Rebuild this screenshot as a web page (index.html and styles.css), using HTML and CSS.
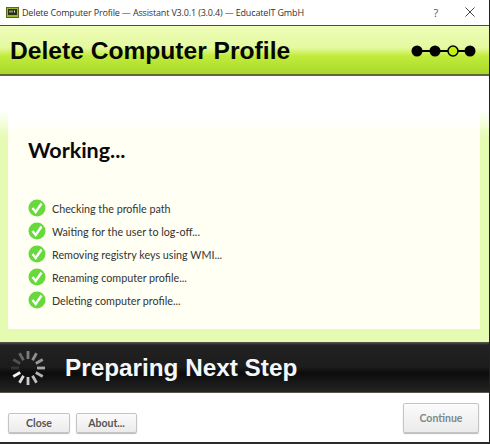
FILE: index.html
```html
<!DOCTYPE html>
<html lang="en">
<head>
<meta charset="utf-8">
<title>Delete Computer Profile</title>
<link rel="stylesheet" href="styles.css">
</head>
<body>
<div class="window">
  <div class="titlebar">
    <svg class="app-icon" width="13" height="11" viewBox="0 0 13 11"><rect x="0.5" y="0.5" width="12" height="10" fill="#9ab82c" stroke="#5c6b1a"/><rect x="2" y="2" width="9" height="6" fill="#2a2f18"/><path d="M4 3.500v2M6 3.500v2M8.500 3.500v2" stroke="#e8f0c0" stroke-width="1"/></svg>
    <span class="title-text">Delete Computer Profile — Assistant V3.0.1 (3.0.4) — EducateIT GmbH</span>
    <span class="help">?</span>
    <svg class="close" width="10" height="10" viewBox="0 0 10 10"><path d="M0.500 0.500l9 9M9.500 0.500l-9 9" stroke="#444" stroke-width="1"/></svg>
  </div>
  <header class="banner">
    <h1>Delete Computer Profile</h1>
    <svg class="steps" width="66" height="14" viewBox="0 0 66 14"><path d="M6 7H60" stroke="#000" stroke-width="2"/><circle cx="7" cy="7" r="5.500" fill="#000"/><circle cx="25" cy="7" r="5.500" fill="#000"/><circle cx="43" cy="7" r="5" fill="#c4ee10" stroke="#000" stroke-width="1.500"/><circle cx="60" cy="7" r="5.500" fill="#000"/></svg>
  </header>
  <main class="content">
    <section class="panel">
      <h2>Working...</h2>
      <ul class="tasks">
        <li><svg class="check" width="18" height="18" viewBox="0 0 18 18"><circle cx="9" cy="9" r="8.500" fill="#68d93c"/><path d="M4.500 9l3.200 4L13.500 4.500" fill="none" stroke="#fff" stroke-width="2.400"/></svg>Checking the profile path</li>
        <li><svg class="check" width="18" height="18" viewBox="0 0 18 18"><circle cx="9" cy="9" r="8.500" fill="#68d93c"/><path d="M4.500 9l3.200 4L13.500 4.500" fill="none" stroke="#fff" stroke-width="2.400"/></svg>Waiting for the user to log-off...</li>
        <li><svg class="check" width="18" height="18" viewBox="0 0 18 18"><circle cx="9" cy="9" r="8.500" fill="#68d93c"/><path d="M4.500 9l3.200 4L13.500 4.500" fill="none" stroke="#fff" stroke-width="2.400"/></svg>Removing registry keys using WMI...</li>
        <li><svg class="check" width="18" height="18" viewBox="0 0 18 18"><circle cx="9" cy="9" r="8.500" fill="#68d93c"/><path d="M4.500 9l3.200 4L13.500 4.500" fill="none" stroke="#fff" stroke-width="2.400"/></svg>Renaming computer profile...</li>
        <li><svg class="check" width="18" height="18" viewBox="0 0 18 18"><circle cx="9" cy="9" r="8.500" fill="#68d93c"/><path d="M4.500 9l3.200 4L13.500 4.500" fill="none" stroke="#fff" stroke-width="2.400"/></svg>Deleting computer profile...</li>
      </ul>
    </section>
  </main>
  <div class="status">
    <svg class="spinner" width="36" height="36" viewBox="-18 -18 36 36" stroke="#fff" stroke-width="2.800">
      <line y1="-9" y2="-17" transform="rotate(0)" opacity="0.42"/>
      <line y1="-9" y2="-17" transform="rotate(30)" opacity="0.5"/>
      <line y1="-9" y2="-17" transform="rotate(60)" opacity="0.55"/>
      <line y1="-9" y2="-17" transform="rotate(90)" opacity="0.62"/>
      <line y1="-9" y2="-17" transform="rotate(120)" opacity="0.68"/>
      <line y1="-9" y2="-17" transform="rotate(150)" opacity="0.72"/>
      <line y1="-9" y2="-17" transform="rotate(180)" opacity="0.78"/>
      <line y1="-9" y2="-17" transform="rotate(210)" opacity="0.85"/>
      <line y1="-9" y2="-17" transform="rotate(240)" opacity="0.95"/>
      <line y1="-9" y2="-17" transform="rotate(270)" opacity="0.12"/>
      <line y1="-9" y2="-17" transform="rotate(300)" opacity="0.22"/>
      <line y1="-9" y2="-17" transform="rotate(330)" opacity="0.32"/>
    </svg>
    <span class="status-text">Preparing Next Step</span>
  </div>
  <footer class="footer">
    <button class="btn btn-close">Close</button>
    <button class="btn btn-about">About...</button>
    <button class="btn btn-next" disabled>Continue</button>
  </footer>
</div>
</body>
</html>
```

FILE: styles.css
```css
* { box-sizing: border-box; }
html, body { margin: 0; padding: 0; background: #fff; }
.window {
  width: 490px;
  height: 444px;
  display: flex;
  flex-direction: column;
  border-right: 1px solid #222;
  border-bottom: 2px solid #2a2a2a;
  overflow: hidden;
}
.titlebar {
  height: 26px;
  flex: none;
  display: flex;
  align-items: center;
  padding: 0 14px 1px 6px;
  background: #fff;
  border-bottom: 1px solid #4a4a4a;
  font: 9px "Open Sans", sans-serif;
  letter-spacing: -0.16px;
  color: #333;
}
.app-icon { flex: none; margin-right: 3px; }
.title-text { flex: 1; white-space: nowrap; }
.help { font-size: 11px; margin-right: 27px; color: #555; }
.close { flex: none; }
.banner {
  height: 50px;
  flex: none;
  display: flex;
  align-items: center;
  justify-content: space-between;
  padding: 2px 13px 0 10px;
  background: linear-gradient(#effdb8 0%, #e4f9a0 45%, #c2ec3c 62%, #a8d82a 100%);
  border-bottom: 2px solid #5f6638;
}
.banner h1 {
  margin: 0;
  font: bold 24.600px "Liberation Sans", Arial, sans-serif;
  color: #060800;
}
.steps { flex: none; }
.content {
  height: 266px;
  flex: none;
  display: flex;
  padding: 35px 9px 13px 8px;
  background: linear-gradient(#fff 0, #fff 34px, #e6fbb2 62px, #e6fbb2 100%);
}
.panel {
  flex: 1;
  padding: 24px 20px 0;
  background: linear-gradient(#fff 0, #fff 13px, #fffff3 20px);
}
.panel h2 {
  margin: 0 0 34px;
  font: bold 21.500px/30px "Lato", sans-serif;
  color: #0a0a0a;
}
.tasks {
  margin: 0;
  padding: 0;
  list-style: none;
  display: flex;
  flex-direction: column;
  gap: 5px;
}
.tasks li {
  height: 18px;
  display: flex;
  align-items: center;
  gap: 6px;
  font: 10.750px "Lato", sans-serif;
  color: #333;
  white-space: nowrap;
}
.check { flex: none; }
.status {
  height: 51px;
  flex: none;
  display: flex;
  align-items: center;
  gap: 19px;
  padding: 1px 0 0 10px;
  background: linear-gradient(#5a5a50 0, #222 3px, #1c1c1c 50%, #0c0c0c 62%, #242424 100%);
  border-bottom: 1px solid #55564a;
}
.spinner { flex: none; }
.status-text {
  font: bold 24.300px "Liberation Sans", Arial, sans-serif;
  color: #f4f8fc;
}
.footer {
  flex: 1;
  min-height: 0;
  display: flex;
  align-items: flex-end;
  gap: 6px;
  padding: 0 10px 9px 8px;
  background: #fff;
}
.btn {
  height: 20px;
  border: 1px solid #c4c4c4;
  border-radius: 2px;
  background: linear-gradient(#fbfbfb, #ebebeb);
  box-shadow: 0 1px 1px #bbb;
  font: bold 10.500px "Lato", sans-serif;
  color: #555;
  padding: 0;
}
.btn-close { width: 62px; }
.btn-about { width: 61px; }
.btn-next {
  width: 76px;
  height: 30px;
  margin-left: auto;
  color: #7a8a8a;
}
```
